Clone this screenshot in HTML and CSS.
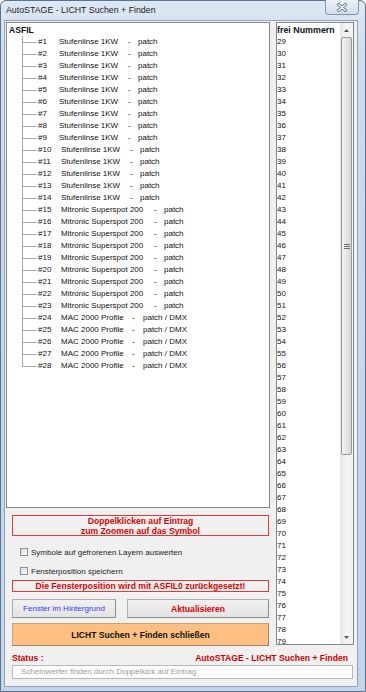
FILE: index.html
```html
<!DOCTYPE html>
<html lang="de">
<head>
  <meta charset="UTF-8" />
  <title>AutoSTAGE - LICHT Suchen + Finden</title>
  <link rel="stylesheet" href="styles.css">
</head>
<body>
  <div class="window">
    <!-- TITLE BAR -->
    <div class="titlebar">
      <span class="title">AutoSTAGE - LICHT Suchen + Finden</span>
      <span class="close">
        <svg width="10" height="9" viewBox="0 0 10 9">
          <path d="M1.5 1.5 L8.5 7.5 M8.5 1.5 L1.5 7.5" stroke="#6a7890" stroke-width="3" stroke-linecap="round" />
          <path d="M1.5 1.5 L8.5 7.5 M8.5 1.5 L1.5 7.5" stroke="#fff" stroke-width="1.2" stroke-linecap="round" />
        </svg>
      </span>
    </div>

    <div class="client">
      <div class="main">
        <div class="left">
          <!-- TREE -->
          <div class="tree">
            <div class="root">ASFIL</div>
            <ul>
              <li><span class="n">#1</span><span class="nm s">Stufenlinse 1KW</span><span class="d">-</span>patch</li>
              <li><span class="n">#2</span><span class="nm s">Stufenlinse 1KW</span><span class="d">-</span>patch</li>
              <li><span class="n">#3</span><span class="nm s">Stufenlinse 1KW</span><span class="d">-</span>patch</li>
              <li><span class="n">#4</span><span class="nm s">Stufenlinse 1KW</span><span class="d">-</span>patch</li>
              <li><span class="n">#5</span><span class="nm s">Stufenlinse 1KW</span><span class="d">-</span>patch</li>
              <li><span class="n">#6</span><span class="nm s">Stufenlinse 1KW</span><span class="d">-</span>patch</li>
              <li><span class="n">#7</span><span class="nm s">Stufenlinse 1KW</span><span class="d">-</span>patch</li>
              <li><span class="n">#8</span><span class="nm s">Stufenlinse 1KW</span><span class="d">-</span>patch</li>
              <li><span class="n">#9</span><span class="nm s">Stufenlinse 1KW</span><span class="d">-</span>patch</li>
              <li><span class="n n2">#10</span><span class="nm s">Stufenlinse 1KW</span><span class="d">-</span>patch</li>
              <li><span class="n n2">#11</span><span class="nm s">Stufenlinse 1KW</span><span class="d">-</span>patch</li>
              <li><span class="n n2">#12</span><span class="nm s">Stufenlinse 1KW</span><span class="d">-</span>patch</li>
              <li><span class="n n2">#13</span><span class="nm s">Stufenlinse 1KW</span><span class="d">-</span>patch</li>
              <li><span class="n n2">#14</span><span class="nm s">Stufenlinse 1KW</span><span class="d">-</span>patch</li>
              <li><span class="n n2">#15</span><span class="nm m">Mitronic Superspot 200</span><span class="d">-</span>patch</li>
              <li><span class="n n2">#16</span><span class="nm m">Mitronic Superspot 200</span><span class="d">-</span>patch</li>
              <li><span class="n n2">#17</span><span class="nm m">Mitronic Superspot 200</span><span class="d">-</span>patch</li>
              <li><span class="n n2">#18</span><span class="nm m">Mitronic Superspot 200</span><span class="d">-</span>patch</li>
              <li><span class="n n2">#19</span><span class="nm m">Mitronic Superspot 200</span><span class="d">-</span>patch</li>
              <li><span class="n n2">#20</span><span class="nm m">Mitronic Superspot 200</span><span class="d">-</span>patch</li>
              <li><span class="n n2">#21</span><span class="nm m">Mitronic Superspot 200</span><span class="d">-</span>patch</li>
              <li><span class="n n2">#22</span><span class="nm m">Mitronic Superspot 200</span><span class="d">-</span>patch</li>
              <li><span class="n n2">#23</span><span class="nm m">Mitronic Superspot 200</span><span class="d">-</span>patch</li>
              <li><span class="n n2">#24</span><span class="nm a">MAC 2000 Profile</span><span class="d d2">-</span>patch / DMX</li>
              <li><span class="n n2">#25</span><span class="nm a">MAC 2000 Profile</span><span class="d d2">-</span>patch / DMX</li>
              <li><span class="n n2">#26</span><span class="nm a">MAC 2000 Profile</span><span class="d d2">-</span>patch / DMX</li>
              <li><span class="n n2">#27</span><span class="nm a">MAC 2000 Profile</span><span class="d d2">-</span>patch / DMX</li>
              <li><span class="n n2">#28</span><span class="nm a">MAC 2000 Profile</span><span class="d d2">-</span>patch / DMX</li>
            </ul>
          </div>

          <!-- CONTROLS -->
          <div class="ctrls">
            <div class="note note-big">Doppelklicken auf Eintrag<br>zum Zoomen auf das Symbol</div>
            <label class="check check-1"><span class="box"></span>Symbole auf gefrorenen Layern auswerten</label>
            <label class="check check-2"><span class="box"></span>Fensterposition speichern</label>
            <div class="note note-small">Die Fensterposition wird mit ASFIL0 zurückgesetzt!</div>
            <div class="btn-row">
              <button class="btn btn-back">Fenster im Hintergrund</button>
              <button class="btn btn-refresh">Aktualisieren</button>
            </div>
            <button class="btn btn-close">LICHT Suchen + Finden schließen</button>
          </div>
        </div>

        <!-- FREE NUMBERS -->
        <div class="list">
          <div class="items">
            <div class="head">frei Nummern</div>
            <div>29</div><div>30</div><div>31</div><div>32</div><div>33</div>
            <div>34</div><div>35</div><div>36</div><div>37</div><div>38</div>
            <div>39</div><div>40</div><div>41</div><div>42</div><div>43</div>
            <div>44</div><div>45</div><div>46</div><div>47</div><div>48</div>
            <div>49</div><div>50</div><div>51</div><div>52</div><div>53</div>
            <div>54</div><div>55</div><div>56</div><div>57</div><div>58</div>
            <div>59</div><div>60</div><div>61</div><div>62</div><div>63</div>
            <div>64</div><div>65</div><div>66</div><div>67</div><div>68</div>
            <div>69</div><div>70</div><div>71</div><div>72</div><div>73</div>
            <div>74</div><div>75</div><div>76</div><div>77</div><div>78</div>
            <div>79</div>
          </div>
          <div class="scroll">
            <div class="arrow">
              <svg width="5" height="3" viewBox="0 0 5 3"><polygon points="0,3 5,3 2.5,0" fill="#555" /></svg>
            </div>
            <div class="thumb"><span class="grip"></span></div>
            <div class="track"></div>
            <div class="arrow">
              <svg width="5" height="3" viewBox="0 0 5 3"><polygon points="0,0 5,0 2.5,3" fill="#555" /></svg>
            </div>
          </div>
        </div>
      </div>

      <!-- STATUS -->
      <div class="status">
        <span>Status :</span>
        <span>AutoSTAGE - LICHT Suchen + Finden</span>
      </div>
      <div class="status-box">Scheinwerfer finden durch Doppelkick auf Eintrag</div>
    </div>
  </div>
</body>
</html>
```

FILE: styles.css
```css
body {
  margin: 0;
  font-family: "Liberation Sans", Arial, sans-serif;
  font-size: 8px;
  color: #111;
  background: #fff;
}
.window {
  box-sizing: border-box;
  width: 366px;
  height: 692px;
  border: 1px solid #5d728f;
  border-radius: 6px 6px 0 0;
  background: linear-gradient(#dde8f4, #ccdbed 60px, #c4d5ea);
  padding: 0 7px 4px 3px;
  display: flex;
  flex-direction: column;
}
.titlebar {
  height: 19px;
  flex: none;
  display: flex;
  justify-content: space-between;
}
.title {
  font-size: 8.8px;
  color: #1b1b1b;
  padding-left: 2px;
  line-height: 19px;
}
.close {
  box-sizing: border-box;
  width: 34px;
  height: 15px;
  margin: -1px -1px 0 0;
  border: 1px solid #8194ae;
  border-top: none;
  border-radius: 0 0 4px 4px;
  background: linear-gradient(#eaf0f8, #d3deec);
  display: flex;
  align-items: center;
  justify-content: center;
}
.client {
  flex: 1;
  background: #f0f0f0;
  border: 1px solid #8fa3bd;
  padding: 1px 2px 0 1px;
  display: flex;
  flex-direction: column;
}
.main {
  display: flex;
  gap: 6px;
  align-items: flex-start;
}
.left {
  width: 264px;
}

/* tree */
.tree {
  box-sizing: border-box;
  height: 486px;
  border: 1px solid #828790;
  background: #fff;
  padding-top: 1px;
}
.root {
  height: 12px;
  line-height: 12px;
  font-weight: bold;
  font-size: 8.6px;
  padding-left: 2px;
}
.tree ul {
  list-style: none;
  margin: 0;
  padding: 0 0 0 15px;
}
.tree li {
  display: flex;
  height: 12px;
  line-height: 12px;
  white-space: nowrap;
}
.tree li::before {
  content: "";
  flex: none;
  width: 14px;
  margin-right: 2px;
  background:
    linear-gradient(#a8a8a8, #a8a8a8) 0 0 / 1px 100% no-repeat,
    linear-gradient(#a8a8a8, #a8a8a8) 0 6px / 100% 1px no-repeat;
}
.tree li:last-child::before {
  background:
    linear-gradient(#a8a8a8, #a8a8a8) 0 0 / 1px 7px no-repeat,
    linear-gradient(#a8a8a8, #a8a8a8) 0 6px / 100% 1px no-repeat;
}
.n { flex: none; width: 21px; }
.n2 { width: 23px; }
.nm { flex: none; }
.nm.s { width: 69px; }
.nm.m { width: 93px; }
.nm.a { width: 71px; }
.d { flex: none; width: 10px; }
.d2 { width: 11px; }

/* controls */
.ctrls {
  padding: 0 1px 0 6px;
}
.note {
  box-sizing: border-box;
  border: 1px solid #df3a35;
  color: #e00000;
  font-weight: bold;
  font-size: 8.6px;
  text-align: center;
  line-height: 10px;
}
.note-big {
  margin-top: 7px;
  height: 21px;
}
.note-small {
  margin-top: 3px;
  height: 12px;
}
.check {
  display: flex;
  align-items: center;
  height: 12px;
  padding-left: 8px;
  color: #222;
}
.check-1 { margin-top: 10px; }
.check-2 { margin-top: 7px; }
.box {
  box-sizing: border-box;
  width: 8px;
  height: 8px;
  margin-right: 3px;
  border: 1px solid #8e8f8f;
  background: linear-gradient(135deg, #dcdcdc, #fbfbfb);
}
.btn-row {
  display: flex;
  gap: 11px;
  margin-top: 7px;
}
.btn {
  box-sizing: border-box;
  font-family: inherit;
  font-size: 8px;
  height: 19px;
  padding: 0;
  border: 1px solid #adadad;
  border-right-color: #8d8d8d;
  border-bottom-color: #8d8d8d;
  background: linear-gradient(#f1f1f1, #e3e3e3);
}
.btn-back {
  width: 104px;
  color: #3a3aff;
}
.btn-refresh {
  flex: 1;
  color: #e00000;
  font-weight: bold;
  font-size: 8.6px;
}
.btn-close {
  display: block;
  width: 100%;
  height: 23px;
  margin-top: 5px;
  background: #ffbf80;
  border-color: #c9a27a;
  border-right-color: #9a8470;
  border-bottom-color: #9a8470;
  color: #111;
  font-weight: bold;
  font-size: 8.6px;
}

/* free numbers list */
.list {
  box-sizing: border-box;
  width: 78px;
  height: 623px;
  border: 1px solid #828790;
  background: #fff;
  display: flex;
}
.items {
  flex: 1;
  overflow: hidden;
  padding-top: 1px;
  line-height: 12px;
}
.head {
  font-weight: bold;
  font-size: 8.9px;
}
.scroll {
  width: 13px;
  display: flex;
  flex-direction: column;
  background: linear-gradient(to right, #e6e6e6, #f5f5f5 50%, #f1f1f1);
}
.arrow {
  height: 14px;
  flex: none;
  display: flex;
  align-items: center;
  justify-content: center;
}
.thumb {
  box-sizing: border-box;
  height: 418px;
  margin: 0 1px;
  border: 1px solid #999;
  border-radius: 2px;
  background: linear-gradient(to right, #f3f3f3, #e2e2e2 60%, #d6d6d6);
  display: flex;
  align-items: center;
  justify-content: center;
}
.grip {
  width: 6px;
  height: 5px;
  background: repeating-linear-gradient(#6a6a6a 0 1px, transparent 1px 2px);
}
.track {
  flex: 1;
}

/* status */
.status {
  display: flex;
  justify-content: space-between;
  height: 12px;
  line-height: 12px;
  margin-top: 6px;
  padding: 0 7px 0 6px;
  color: #d00000;
  font-weight: bold;
  font-size: 8.6px;
}
.status-box {
  box-sizing: border-box;
  height: 14px;
  margin: 1px 2px 0 6px;
  padding-left: 8px;
  border: 1px solid #b5b8bd;
  background: #fff;
  color: #9a9a9a;
  line-height: 12px;
}
```
